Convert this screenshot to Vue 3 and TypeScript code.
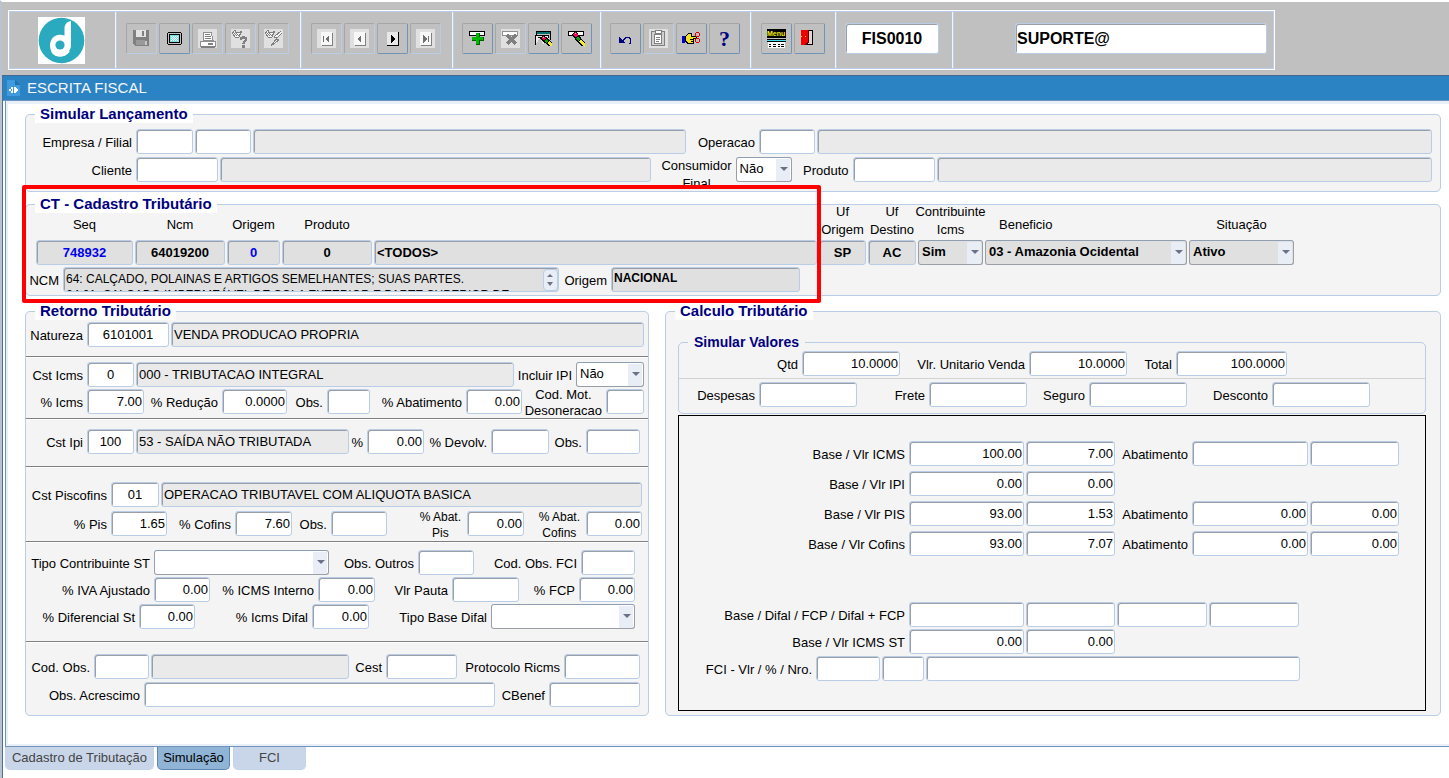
<script setup lang="ts">
import { h } from 'vue'
import type { FunctionalComponent } from 'vue'

type Mod = 'num' | 'mid' | 'ro' | ''

interface Cell {
  kind: 'label' | 'field' | 'select'
  id: string
  text: string
  mod?: Mod
  lines?: string[]
}

interface Row {
  name: string
  cells: Cell[]
}

const label = (id: string, text: string): Cell => ({ kind: 'label', id, text })
const stack = (id: string, ...lines: string[]): Cell => ({ kind: 'label', id, text: '', lines })
const field = (id: string, text = '', mod: Mod = ''): Cell => ({ kind: 'field', id, text, mod })
const select = (id: string, text = ''): Cell => ({ kind: 'select', id, text })

const FormRow: FunctionalComponent<{ row: Row }> = (props) =>
  h(
    'div',
    { class: ['row', props.row.name] },
    props.row.cells.map((c) => {
      if (c.kind === 'label') {
        return c.lines
          ? h('label', { class: 'lbl stack', for: c.id }, c.lines.map((l) => h('span', l)))
          : h('label', { class: 'lbl', for: c.id }, c.text)
      }
      if (c.kind === 'select') {
        return h('span', { class: 'combo' }, [h('select', { id: c.id }, [h('option', c.text)])])
      }
      return h('input', {
        id: c.id,
        class: ['field', c.mod],
        type: 'text',
        value: c.text,
        readonly: c.mod === 'ro',
        'aria-label': c.id.replace(/-/g, ' '),
      })
    }),
  )
FormRow.props = ['row']

const simular: Row[] = [
  {
    name: 'r-empresa',
    cells: [
      label('empresa', 'Empresa / Filial'), field('empresa'), field('filial'), field('empresa-nome', '', 'ro'),
      label('operacao', 'Operacao'), field('operacao'), field('operacao-nome', '', 'ro'),
    ],
  },
  {
    name: 'r-cliente',
    cells: [
      label('cliente', 'Cliente'), field('cliente'), field('cliente-nome', '', 'ro'),
      stack('consumidor', 'Consumidor', 'Final'), select('consumidor', 'Não'),
      label('produto', 'Produto'), field('produto'), field('produto-nome', '', 'ro'),
    ],
  },
]

const groups: { name: string; rows: Row[] }[] = [
  {
    name: 'g-natureza',
    rows: [
      {
        name: 'r-natureza',
        cells: [label('natureza', 'Natureza'), field('natureza', '6101001', 'mid'), field('natureza-nome', 'VENDA PRODUCAO PROPRIA', 'ro')],
      },
    ],
  },
  {
    name: 'g-icms',
    rows: [
      {
        name: 'r-cst-icms',
        cells: [
          label('cst-icms', 'Cst Icms'), field('cst-icms', '0', 'mid'), field('cst-icms-nome', '000 - TRIBUTACAO INTEGRAL', 'ro'),
          label('incluir-ipi', 'Incluir IPI'), select('incluir-ipi', 'Não'),
        ],
      },
      {
        name: 'r-icms',
        cells: [
          label('icms', '% Icms'), field('icms', '7.00', 'num'), label('reducao', '% Redução'), field('reducao', '0.0000', 'num'),
          label('obs-icms', 'Obs.'), field('obs-icms'), label('abatimento', '% Abatimento'), field('abatimento', '0.00', 'num'),
          stack('desoneracao', 'Cod. Mot.', 'Desoneracao'), field('desoneracao'),
        ],
      },
    ],
  },
  {
    name: 'g-ipi',
    rows: [
      {
        name: 'r-ipi',
        cells: [
          label('cst-ipi', 'Cst Ipi'), field('cst-ipi', '100', 'mid'), field('cst-ipi-nome', '53 - SAÍDA NÃO TRIBUTADA', 'ro'),
          label('ipi', '%'), field('ipi', '0.00', 'num'), label('devolv', '% Devolv.'), field('devolv'),
          label('obs-ipi', 'Obs.'), field('obs-ipi'),
        ],
      },
    ],
  },
  {
    name: 'g-pis',
    rows: [
      {
        name: 'r-cst-pis',
        cells: [
          label('cst-pis', 'Cst Piscofins'), field('cst-pis', '01', 'mid'),
          field('cst-pis-nome', 'OPERACAO TRIBUTAVEL COM ALIQUOTA BASICA', 'ro'),
        ],
      },
      {
        name: 'r-pis',
        cells: [
          label('pis', '% Pis'), field('pis', '1.65', 'num'), label('cofins', '% Cofins'), field('cofins', '7.60', 'num'),
          label('obs-pis', 'Obs.'), field('obs-pis'), stack('abat-pis', '% Abat.', 'Pis'), field('abat-pis', '0.00', 'num'),
          stack('abat-cofins', '% Abat.', 'Cofins'), field('abat-cofins', '0.00', 'num'),
        ],
      },
    ],
  },
  {
    name: 'g-st',
    rows: [
      {
        name: 'r-tipo-st',
        cells: [
          label('tipo-st', 'Tipo Contribuinte ST'), select('tipo-st'), label('obs-outros', 'Obs. Outros'), field('obs-outros'),
          label('obs-fci', 'Cod. Obs. FCI'), field('obs-fci'),
        ],
      },
      {
        name: 'r-iva',
        cells: [
          label('iva', '% IVA Ajustado'), field('iva', '0.00', 'num'), label('icms-interno', '% ICMS Interno'), field('icms-interno', '0.00', 'num'),
          label('pauta', 'Vlr Pauta'), field('pauta'), label('fcp', '% FCP'), field('fcp', '0.00', 'num'),
        ],
      },
      {
        name: 'r-difal',
        cells: [
          label('dif-st', '% Diferencial St'), field('dif-st', '0.00', 'num'), label('icms-difal', '% Icms Difal'), field('icms-difal', '0.00', 'num'),
          label('base-difal', 'Tipo Base Difal'), select('base-difal'),
        ],
      },
    ],
  },
  {
    name: 'g-obs',
    rows: [
      {
        name: 'r-cod-obs',
        cells: [
          label('cod-obs', 'Cod. Obs.'), field('cod-obs'), field('cod-obs-nome', '', 'ro'), label('cest', 'Cest'), field('cest'),
          label('protocolo', 'Protocolo Ricms'), field('protocolo'),
        ],
      },
      {
        name: 'r-acrescimo',
        cells: [label('acrescimo', 'Obs. Acrescimo'), field('acrescimo'), label('cbenef', 'CBenef'), field('cbenef')],
      },
    ],
  },
]

const valores: Row[] = [
  {
    name: 'r-qtd',
    cells: [
      label('qtd', 'Qtd'), field('qtd', '10.0000', 'num'), label('unitario', 'Vlr. Unitario Venda'), field('unitario', '10.0000', 'num'),
      label('total', 'Total'), field('total', '100.0000', 'num'),
    ],
  },
  {
    name: 'r-despesas',
    cells: [
      label('despesas', 'Despesas'), field('despesas'), label('frete', 'Frete'), field('frete'),
      label('seguro', 'Seguro'), field('seguro'), label('desconto', 'Desconto'), field('desconto'),
    ],
  },
]

const bases: Row[] = [
  {
    name: 'r-base',
    cells: [
      label('b-icms', 'Base / Vlr ICMS'), field('b-icms', '100.00', 'num'), field('v-icms', '7.00', 'num'),
      label('ab-icms', 'Abatimento'), field('ab-icms'), field('av-icms'),
    ],
  },
  { name: 'r-base', cells: [label('b-ipi', 'Base / Vlr IPI'), field('b-ipi', '0.00', 'num'), field('v-ipi', '0.00', 'num')] },
  {
    name: 'r-base',
    cells: [
      label('b-pis', 'Base / Vlr PIS'), field('b-pis', '93.00', 'num'), field('v-pis', '1.53', 'num'),
      label('ab-pis', 'Abatimento'), field('ab-pis', '0.00', 'num'), field('av-pis', '0.00', 'num'),
    ],
  },
  {
    name: 'r-base',
    cells: [
      label('b-cofins', 'Base / Vlr Cofins'), field('b-cofins', '93.00', 'num'), field('v-cofins', '7.07', 'num'),
      label('ab-cofins', 'Abatimento'), field('ab-cofins', '0.00', 'num'), field('av-cofins', '0.00', 'num'),
    ],
  },
]

const totais: Row[] = [
  {
    name: 'r-fcp',
    cells: [label('t-difal', 'Base / Difal / FCP / Difal + FCP'), field('t-difal'), field('t-valor'), field('t-fcp'), field('t-soma')],
  },
  { name: 'r-fcp', cells: [label('t-st', 'Base / Vlr ICMS ST'), field('t-st', '0.00', 'num'), field('v-st', '0.00', 'num')] },
  { name: 'r-fci', cells: [label('fci', 'FCI - Vlr / % / Nro.'), field('fci'), field('fci-perc'), field('fci-nro')] },
]

const ncmTexto =
  '64: CALÇADO, POLAINAS E ARTIGOS SEMELHANTES; SUAS PARTES.\n64.01: CALÇADO IMPERMEÁVEL DE SOLA EXTERIOR E PARTE SUPERIOR DE'
</script>

<template>
  <div class="app">
    <header class="toolbar">
      <div class="frame">
        <div class="sec s-logo">
          <svg class="logo" viewBox="0 0 47 47" aria-label="Logo">
            <rect width="47" height="47" fill="#fff" />
            <circle cx="23.5" cy="23.5" r="22.8" fill="#2aaabf" />
            <path d="M33 4C28 5 26.500 8 26.500 12V18.500C17 15.500 12 22 12 28.500C12 35 16.500 39.500 22 39.500C26 39.500 28.500 38 29.500 35.500C32 34 33 31 33 28Z" fill="#fff" />
            <circle cx="22" cy="28" r="4.600" fill="#2aaabf" />
            <path d="M14 34C17 40 26 40 31 34" fill="none" stroke="#fff" stroke-width="2" />
          </svg>
        </div>
        <div class="sec">
          <button class="tool off" aria-label="Salvar">
            <svg viewBox="0 0 19 19"><path d="M1 1H17V17H3L1 15Z" fill="#808080" /><path d="M4 1H14V8H4Z" fill="#e4e4e4" /><path d="M10 2H12V7H10Z" fill="#808080" /><path d="M4 11H13V16H4Z" fill="#999" /><path d="M13 12H15V16H13Z" fill="#c8c8c8" /></svg>
          </button>
          <button class="tool" aria-label="Tela">
            <svg viewBox="0 0 19 19"><path d="M3 3H16V4H17V15H16V16H3V15H2V4H3Z" fill="#000" /><path d="M3 4H16V15H3Z" fill="#c0c0c0" /><path d="M4 5H15V14H4Z" fill="#000" /><path d="M5 6H14V13H5Z" fill="#70e4e4" /><path d="M6 7.500h1M8 7.500h1M10 7.500h1M12 7.500h1M7 8.500h1M9 8.500h1M11 8.500h1M6 9.500h1M8 9.500h1M10 9.500h1M12 9.500h1M7 10.500h1M9 10.500h1M11 10.500h1M6 11.500h1M8 11.500h1M10 11.500h1M12 11.500h1" stroke="#fff" /></svg>
          </button>
          <button class="tool off" aria-label="Imprimir">
            <svg viewBox="0 0 19 19"><path d="M0 0H19V19H0Z" fill="#e0e0e0" /><path d="M5 3H13L15 11H5Z" fill="#fff" stroke="#909090" /><path d="M7 5.500H12M7 7.500H13M7 9.500H13" stroke="#808080" /><path d="M2 12H17V17H2Z" fill="#fff" stroke="#909090" /><path d="M3 17.500H17M10 14.500H15" stroke="#808080" stroke-width="2" /></svg>
          </button>
          <button class="tool off" aria-label="Consultar">
            <svg viewBox="0 0 19 19"><path d="M0 0H19V19H0Z" fill="#e0e0e0" /><path d="M1 4L4 1L5 4L10 3L8 8L4 8ZM9 2l2 2" fill="#f4f4f4" stroke="#808080" /><path d="M5 4l3 3M2 3l4 4" stroke="#808080" /><path d="M10 10.500C10 8 15 8 15 10.500C15 12.500 12.500 12 12.500 14.500M12.500 16V18.500" fill="none" stroke="#808080" stroke-width="2.500" /></svg>
          </button>
          <button class="tool off" aria-label="Executar consulta">
            <svg viewBox="0 0 19 19"><path d="M0 0H19V19H0Z" fill="#e0e0e0" /><path d="M1 4L4 1L5 4L10 3L8 8L4 8ZM9 2l2 2" fill="#f4f4f4" stroke="#808080" /><path d="M5 4l3 3M2 3l4 4" stroke="#808080" /><path d="M17 2L10 8L13 9L7 17L15 11L12 10L18 4" fill="#f4f4f4" stroke="#808080" /></svg>
          </button>
        </div>
        <div class="sec s-nav">
          <button class="tool off" aria-label="Primeiro">
            <svg viewBox="0 0 19 19"><path d="M0 0H19V19H0Z" fill="#e0e0e0" /><path d="M4 3H15V16H4Z" fill="#f8f8f8" /><path d="M5 16.500H15.500V4" fill="none" stroke="#808080" /><path d="M6 7H7V13H6ZM12 6V14L8 10Z" fill="#707070" /></svg>
          </button>
          <button class="tool off" aria-label="Anterior">
            <svg viewBox="0 0 19 19"><path d="M0 0H19V19H0Z" fill="#e0e0e0" /><path d="M4 3H15V16H4Z" fill="#f8f8f8" /><path d="M5 16.500H15.500V4" fill="none" stroke="#808080" /><path d="M11 6V14L7 10Z" fill="#707070" /></svg>
          </button>
          <button class="tool" aria-label="Próximo">
            <svg viewBox="0 0 19 19"><path d="M4 3H15V16H4Z" fill="#e8e8e8" /><path d="M4 16.500H15.500V3" fill="none" stroke="#000" /><path d="M8 6V14L12 10Z" fill="#000" /></svg>
          </button>
          <button class="tool off" aria-label="Último">
            <svg viewBox="0 0 19 19"><path d="M0 0H19V19H0Z" fill="#e0e0e0" /><path d="M4 3H15V16H4Z" fill="#f8f8f8" /><path d="M5 16.500H15.500V4" fill="none" stroke="#808080" /><path d="M7 6V14L11 10ZM12 7H13V13H12Z" fill="#707070" /></svg>
          </button>
        </div>
        <div class="sec s-edit">
          <button class="tool" aria-label="Inserir">
            <svg viewBox="0 0 19 19"><path d="M1.500 2.500H16.500V6.500H1.500Z" fill="#fff" stroke="#000" /><path d="M8 4H12V8H16V12H12V16H8V12H4V8H8Z" fill="#006000" /><path d="M8 4H11V8H15V11H11V15H8V11H4V8H8Z" fill="#00b800" /></svg>
          </button>
          <button class="tool off" aria-label="Excluir">
            <svg viewBox="0 0 19 19"><path d="M0 0H19V19H0Z" fill="#e0e0e0" /><path d="M1.500 2.500H16.500V6.500H1.500Z" fill="#fff" stroke="#909090" /><path d="M6 6L15 15M15 6L6 15" stroke="#808080" stroke-width="3" /></svg>
          </button>
          <button class="tool" aria-label="Limpar tela">
            <svg viewBox="0 0 19 19"><path d="M2 2H17V5H2Z" fill="#007070" /><path d="M1 6H15V9L9 15H1Z" fill="#e8e8e8" /><path d="M2 2.500H17M2.500 2V6M16.500 2V11M1 6.500H15M1.500 6V16M4 8.500H9M14.500 6V9" stroke="#000" fill="none" /><path d="M2 15L6 9L9 15Z" fill="#c0c0c0" /><path d="M6 9L9 6L12 8L18 14V17H15L7 11Z" fill="#000" /><path d="M7 9L9 7L12 9L10 12Z" fill="#f00060" /><path d="M9 8H10V9H9Z" fill="#ffd040" /><path d="M10 12L12 10L14 12L12 14Z" fill="#00a800" /><path d="M13 14L15 12L18 15V17H16Z" fill="#f4ec30" /></svg>
          </button>
          <button class="tool" aria-label="Limpar registro">
            <svg viewBox="0 0 19 19"><path d="M1.500 2.500H16.500V6.500H1.500Z" fill="#fff" stroke="#000" /><path d="M5 5L8 2L11 5L18 14V17H15L9 12Z" fill="#000" /><path d="M6 5L8 3L11 6L9 9Z" fill="#f00060" /><path d="M8 4H9V5H8Z" fill="#ffd040" /><path d="M9 9L11 7L13 10L11 12Z" fill="#00a800" /><path d="M12 12L14 10L18 15V18H17Z" fill="#f4ec30" /></svg>
          </button>
        </div>
        <div class="sec s-help">
          <button class="tool" aria-label="Desfazer">
            <svg viewBox="0 0 19 19"><path d="M3 8V14H9L7 12L10 9H12L14 11V14H13V15H15V10L13 8H9L6 11L3 8Z" fill="#000080" /></svg>
          </button>
          <button class="tool off" aria-label="Colar">
            <svg viewBox="0 0 19 19"><path d="M0 0H19V19H0Z" fill="#e0e0e0" /><rect x="2.500" y="2.500" width="13" height="14" rx="1" fill="#d0d0d0" stroke="#808080" /><path d="M5.500 5.500H12.500V14.500H5.500ZM6 1.500H12V4H6Z" fill="#fff" stroke="#808080" /><path d="M7 8.500H11M7 10.500H11M7 12.500H10" stroke="#808080" /></svg>
          </button>
          <button class="tool" aria-label="Recortar">
            <svg viewBox="0 0 19 19"><path d="M0 7H3V14H0Z" fill="#0000d0" /><path d="M3 7L6 4H10V7H15V10H12V15H6L3 13Z" fill="#000" /><path d="M4 7L7 5H9V8H14V9H11V14H7L4 12Z" fill="#f4e420" /><path d="M8 10.500H12M9 12.500H11" stroke="#000" /><circle cx="15.500" cy="5.500" r="2" fill="none" stroke="#e00000" /><circle cx="15.500" cy="11.500" r="2" fill="none" stroke="#e00000" /></svg>
          </button>
          <button class="tool ask" aria-label="Ajuda">?</button>
        </div>
        <div class="sec s-menu">
          <button class="tool" aria-label="Menu">
            <svg viewBox="0 0 19 19"><path d="M0 0H19V9H0Z" fill="#000" /><text x="0" y="7" class="mini">Menu</text><path d="M0 10H19V13H0Z" fill="#40e0f0" /><path d="M0 10.500H19M0 12.500H19" stroke="#000" /><path d="M1 13H18V19H1Z" fill="#fff" /><path d="M2 15.500H4M6 15.500H9M11 15.500H13M14 15.500H17M2 17.500H4M6 17.500H9M11 17.500H13M14 17.500H17" stroke="#000" /></svg>
          </button>
          <button class="tool" aria-label="Sair">
            <svg viewBox="0 0 19 19"><path d="M1.500 1.500H12.500V15.500H1.500Z" fill="#fff" stroke="#000" /><path d="M0 1H8V13L5 16H1V1Z" fill="#f00000" /><path d="M5.500 16L8.500 13V1" fill="none" stroke="#600" /><path d="M1 7H2V8H1ZM5 7H6V8H5Z" fill="#f8e000" /><path d="M9 2H12V15H7L9 13Z" fill="#d8d8d8" /></svg>
          </button>
        </div>
        <div class="sec s-code">
          <input class="field code" type="text" value="FIS0010" aria-label="Programa" />
        </div>
        <div class="sec s-user">
          <input class="field user" type="text" value="SUPORTE@" aria-label="Usuário" />
        </div>
      </div>
    </header>

    <div class="window">
      <h1 class="title">
        <svg viewBox="0 0 13 16" aria-hidden="true"><path d="M0 0H8L13 5V16H0Z" fill="#3f9bdd" /><path d="M8 0V5H13" fill="#2372ad" /><path d="M2 9H4V7H6V13H4V11H2ZM7 7H8L11 10L8 13H7Z" fill="#fff" /><path d="M4 9H5V11H4Z" fill="#3f9bdd" /></svg>
        ESCRITA FISCAL
      </h1>
      <main class="panel">
        <fieldset class="box b-simular">
          <legend>Simular Lançamento</legend>
          <FormRow v-for="r in simular" :key="r.name" :row="r" />
        </fieldset>

        <div class="ct-wrap">
          <fieldset class="box b-ct">
            <legend>CT - Cadastro Tributário</legend>
            <div class="ct">
              <label class="head" for="ct-seq">Seq</label>
              <label class="head" for="ct-ncm">Ncm</label>
              <label class="head" for="ct-origem">Origem</label>
              <label class="head" for="ct-produto">Produto</label>
              <span></span>
              <label class="head two" for="ct-uf-o"><span>Uf</span><span>Origem</span></label>
              <label class="head two" for="ct-uf-d"><span>Uf</span><span>Destino</span></label>
              <label class="head two" for="ct-contrib"><span>Contribuinte</span><span>Icms</span></label>
              <label class="head lead" for="ct-benef">Beneficio</label>
              <label class="head" for="ct-sit">Situação</label>
              <input id="ct-seq" class="field mid ct-f blue" type="text" value="748932" />
              <input id="ct-ncm" class="field mid ct-f" type="text" value="64019200" />
              <input id="ct-origem" class="field mid ct-f blue" type="text" value="0" />
              <input id="ct-produto" class="field mid ct-f" type="text" value="0" />
              <input class="field ct-f" type="text" value="<TODOS>" aria-label="Nome do produto" />
              <input id="ct-uf-o" class="field mid ct-f" type="text" value="SP" />
              <input id="ct-uf-d" class="field mid ct-f" type="text" value="AC" />
              <span class="combo dim"><select id="ct-contrib"><option>Sim</option></select></span>
              <span class="combo dim"><select id="ct-benef"><option>03 - Amazonia Ocidental</option></select></span>
              <span class="combo dim"><select id="ct-sit"><option>Ativo</option></select></span>
            </div>
            <div class="row r-ncm">
              <label class="lbl" for="ncm-texto">NCM</label>
              <span class="memo">
                <textarea id="ncm-texto" class="field" readonly :value="ncmTexto"></textarea>
                <span class="spin"><i class="up"></i><i class="down"></i></span>
              </span>
              <label class="lbl" for="origem-texto">Origem</label>
              <input id="origem-texto" class="field ct-f small" type="text" value="NACIONAL" />
            </div>
          </fieldset>
          <div class="mark"></div>
        </div>

        <div class="cols">
          <fieldset class="box b-retorno">
            <legend>Retorno Tributário</legend>
            <div v-for="g in groups" :key="g.name" :class="['group', g.name]">
              <FormRow v-for="r in g.rows" :key="r.name" :row="r" />
            </div>
          </fieldset>
          <fieldset class="box b-calculo">
            <legend>Calculo Tributário</legend>
            <fieldset class="box b-valores">
              <legend>Simular Valores</legend>
              <FormRow v-for="r in valores" :key="r.name" :row="r" />
            </fieldset>
            <div class="calc">
              <div class="bases"><FormRow v-for="(r, i) in bases" :key="i" :row="r" /></div>
              <div class="totais"><FormRow v-for="(r, i) in totais" :key="i" :row="r" /></div>
            </div>
          </fieldset>
        </div>
      </main>
      <nav class="tabs">
        <button class="tab t1">Cadastro de Tributação</button>
        <button class="tab t2 on">Simulação</button>
        <button class="tab t3">FCI</button>
      </nav>
    </div>
  </div>
</template>

<style scoped>
.app {
  --line: #b9cde6;
  --dark: #9a9ea6;
  min-height: 100vh;
  display: flex;
  flex-direction: column;
  box-sizing: border-box;
  border-top: 2px solid #fff;
  border-left: 2px solid #b9c2cf;
  background: #c0c0c0;
  font: 13px/18px "Liberation Sans", Arial, sans-serif;
  color: #000;
}
.app :deep(*) { box-sizing: border-box; }
.toolbar { padding: 8px 6px 5px; }
.frame {
  display: flex;
  width: 1267px;
  max-width: 100%;
  height: 60px;
  border: 1px solid #fff;
  outline: 1px solid var(--line);
  outline-offset: -2px;
}
.sec {
  display: flex;
  gap: 2px;
  flex: 0 0 185px;
  padding: 12px 0 0 10px;
  border-left: 1px solid #f0f5fb;
  box-shadow: inset 1px 0 0 var(--line);
}
.s-logo { flex-basis: 106px; padding: 6px 0 0 29px; border-left: 0; box-shadow: none; }
.s-nav { flex-basis: 152px; }
.s-edit { flex-basis: 148px; padding-left: 9px; }
.s-help { flex-basis: 150px; padding-left: 9px; }
.s-menu { flex-basis: 85px; }
.s-code { flex-basis: 117px; padding-left: 9px; }
.s-user { flex: 1 1 0; padding: 12px 7px 0 62px; }
.logo { width: 47px; height: 47px; }
.tool {
  width: 31px;
  height: 31px;
  padding: 4px 5px;
  background: #c0c0c0;
  border: 1px solid #a6a6a6;
  border-right: 1px solid #7093b8;
  border-bottom: 1px solid #7093b8;
  border-radius: 2px;
  font: inherit;
}
.tool.off { border-right-color: var(--line); border-bottom-color: var(--line); }
.tool svg { display: block; width: 19px; height: 19px; shape-rendering: crispEdges; }
.tool.ask { padding: 0; font: bold 22px/24px "Liberation Serif", serif; color: #000080; }
.mini { font: bold 7px "Liberation Sans", sans-serif; fill: #f8f000; }

.window { flex: 1; display: flex; flex-direction: column; background: #fff; border-left: 1px solid #4d6f9c; }
.title {
  display: flex;
  align-items: center;
  gap: 7px;
  margin: 0;
  height: 26px;
  padding: 0 4px;
  background: #2c83c4;
  border-top: 1px solid #46688f;
  border-bottom: 1px solid #6f93ba;
  font: 15px/24px "Liberation Sans", Arial, sans-serif;
  color: #f2f6fa;
}
.title svg { width: 13px; height: 16px; shape-rendering: crispEdges; }
.panel {
  margin-left: 2px;
  padding: 4px 8px 30px 19px;
  border-left: 1px solid #6f93ba;
  border-bottom: 1px solid #6f93ba;
  box-shadow: inset 2px 3px 0 #e9eff7, inset 0 -2px 0 #e9eff7;
}
.box {
  margin: 0;
  padding: 0;
  min-width: 0;
  background: #f4f4f4;
  border: 1px solid var(--line);
  border-radius: 5px;
}
.box > legend {
  margin-left: 9px;
  padding: 0 5px;
  height: 18px;
  background: #fff;
  font: bold 15px/18px "Liberation Sans", Arial, sans-serif;
  color: #000080;
}
.b-simular { padding: 6px 0 9px; }
.b-simular :deep(.row + .row) { margin-top: 3px; }

.app :deep(.row) { display: grid; column-gap: 2px; height: 25px; justify-content: start; }
.app :deep(.lbl) { padding: 5px 2px 0 0; text-align: right; white-space: nowrap; line-height: 18px; }
.app :deep(.stack) {
  justify-self: end;
  margin-top: -2px;
  padding: 0 2px 0 0;
  text-align: center;
  line-height: 16px;
}
.app :deep(.stack span) { display: block; }
.app :deep(.r-cliente .stack) { height: 28px; margin-top: 0; overflow: hidden; line-height: 18px; }
.app :deep(.r-pis .stack) { font-size: 12px; padding-right: 4px; }
.app :deep(.field) {
  width: 100%;
  min-width: 0;
  height: 25px;
  margin: 0;
  padding: 0 2px 1px;
  border: 1px solid var(--line);
  border-radius: 3px;
  box-shadow: inset 1px 1px 0 var(--dark);
  background: #fff;
  font: 13px/18px "Liberation Sans", Arial, sans-serif;
  color: #000;
  outline: none;
}
.app :deep(.num) { text-align: right; padding-right: 1px; }
.app :deep(.mid) { text-align: center; }
.app :deep(.ro) { background: #eaeaea; }
.app :deep(.ct-f) { background: #e0e0e0; font-weight: bold; }
.app :deep(.small) { padding-bottom: 3px; font-size: 12px; }
.app :deep(.blue) { color: #0000f0; }
.app .field.code, .app .field.user { height: 31px; padding: 0 1px; font: bold 16px/20px "Liberation Sans", Arial, sans-serif; }
.app .field.code { width: 94px; text-align: center; }
.app :deep(.combo) { position: relative; display: block; min-width: 0; height: 25px; }
.app :deep(.combo select) {
  appearance: none;
  width: 100%;
  height: 100%;
  padding: 0 16px 1px 3px;
  border: 1px solid var(--dark);
  border-top-color: #8f9eb0;
  border-radius: 3px;
  background: linear-gradient(#e8edf6, #e8edf6) right 1px top 1px / 14px 100% no-repeat #fff;
  font: inherit;
  color: #000;
}
.app :deep(.combo)::after {
  content: "";
  position: absolute;
  right: 4px;
  top: 10px;
  border: 4px solid transparent;
  border-top: 4px solid #6b7288;
  border-bottom: 0;
  pointer-events: none;
}
.app .combo.dim select { background-color: #e0e0e0; font-weight: bold; }

.app :deep(.r-empresa) { grid-template-columns: 108px 57px 56px minmax(0, 433fr) 69px 56px minmax(0, 615fr); padding-right: 8px; }
.app :deep(.r-cliente) { grid-template-columns: 108px 82px minmax(0, 431fr) 81px 56px 57px 82px minmax(0, 496fr); padding-right: 8px; }

.ct-wrap { position: relative; margin-top: 3px; }
.b-ct { padding-bottom: 3px; }
.ct {
  display: grid;
  grid-template: 27px 25px / 97px 90px 53px 90px minmax(0, 1fr) 47px 48px 65px 202px 105px;
  column-gap: 2px;
  padding: 0 146px 0 10px;
}
.head { align-self: end; justify-self: center; padding-bottom: 6px; white-space: nowrap; text-align: center; }
.head.two { padding-bottom: 1px; }
.head.two span { display: block; }
.head.lead { justify-self: start; padding-left: 14px; }
.app .r-ncm { grid-template-columns: 35px minmax(0, 1fr) 48px 189px; margin-top: 2px; padding-right: 640px; }
.memo { position: relative; display: block; }
.app .memo textarea {
  display: block;
  resize: none;
  overflow: hidden;
  padding: 3px 18px 0 2px;
  background: #e0e0e0;
  font-size: 12px;
  line-height: 16px;
  white-space: pre;
}
.spin {
  position: absolute;
  right: 1px;
  top: 2px;
  width: 15px;
  height: 22px;
  background: #e8edf6;
  border: 1px solid var(--line);
  border-radius: 4px;
}
.spin i { position: absolute; left: 3px; border: 3px solid transparent; }
.spin .up { top: 4px; border-bottom: 3px solid #6b7288; border-top: 0; }
.spin .down { bottom: 4px; border-top: 4px solid #6b7288; border-bottom: 0; }
.mark {
  position: absolute;
  left: -3px;
  right: 620px;
  top: -10px;
  bottom: -7px;
  border: 4px solid #f00;
  border-radius: 2px;
  pointer-events: none;
}

.cols { display: grid; grid-template-columns: minmax(0, 624fr) minmax(0, 776fr); gap: 16px; margin-top: 6px; }
.group { border-bottom: 1px solid #808080; box-shadow: 0 1px 0 #fff; margin-bottom: 1px; display: grid; }
.g-natureza { padding: 2px 0 9px; }
.g-icms { padding: 4px 0; row-gap: 2px; }
.g-ipi { padding: 9px 0 12px; }
.g-pis { padding: 14px 0 5px; row-gap: 4px; }
.g-st { padding: 7px 0 12px; row-gap: 2px; }
.g-obs { padding: 11px 0 8px; row-gap: 3px; border-bottom: 0; box-shadow: none; margin: 0; }
.app :deep(.r-natureza) { grid-template-columns: 59px 82px minmax(0, 1fr); padding-right: 4px; }
.app :deep(.r-cst-icms) { grid-template-columns: 59px 47px minmax(0, 1fr) 58px 68px; padding-right: 4px; }
.app :deep(.r-icms) { grid-template-columns: 59px 57px 74px 65px 36px 43px minmax(0, 1fr) 56px 80px 38px; padding-right: 4px; }
.app :deep(.r-ipi) { grid-template-columns: 59px 47px minmax(0, 1fr) 14px 57px 63px 58px 33px 54px; padding-right: 8px; }
.app :deep(.r-cst-pis) { grid-template-columns: 83px 48px minmax(0, 1fr); padding-right: 6px; }
.app :deep(.r-pis) { grid-template-columns: 83px 56px 64px 57px 35px 56px minmax(0, 1fr) 57px 58px 56px; padding-right: 6px; }
.app :deep(.r-tipo-st) { grid-template-columns: 126px minmax(0, 1fr) 85px 56px 103px 54px; padding-right: 13px; }
.app :deep(.r-iva) { grid-template-columns: 126px 56px 104px 57px minmax(0, 1fr) 67px 56px 56px; padding-right: 13px; }
.app :deep(.r-difal) { grid-template-columns: 111px 56px 113px 57px 118px minmax(0, 1fr); padding-right: 13px; }
.app :deep(.r-cod-obs) { grid-template-columns: 66px 55px minmax(0, 1fr) 33px 71px 103px 76px; padding-right: 8px; }
.app :deep(.r-acrescimo) { grid-template-columns: 116px minmax(0, 1fr) 50px 91px; padding-right: 8px; }

.b-calculo { padding: 13px 14px 4px 12px; display: flex; flex-direction: column; }
.b-calculo > legend { margin-left: -3px; }
.b-valores { padding-bottom: 6px; }
.box.b-valores > legend { margin-left: 9px; background: #f4f4f4; font-size: 14px; padding: 0 6px; }
.app :deep(.r-qtd) { grid-template-columns: 121px 98px 125px 98px 45px 111px; }
.app :deep(.r-despesas) {
  grid-template-columns: 78px 98px 68px 98px 58px 98px 81px 98px;
  height: 29px;
  margin-top: 2px;
  padding-top: 3px;
  border-top: 1px solid #d2d2d2;
}
.calc { flex: 1; margin-top: 1px; padding: 25px 0 28px; border: 1px solid #000; }
.bases { display: grid; row-gap: 5px; margin-bottom: 46px; }
.totais { display: grid; row-gap: 2px; }
.app :deep(.r-base) { grid-template-columns: 228px 115px 89px 73px 116px 89px; }
.app :deep(.r-fcp) { grid-template-columns: 228px 115px 89px 90px 90px; }
.app :deep(.r-fci) { grid-template-columns: 135px 64px 42px 374px; }

.tabs { display: flex; gap: 3px; padding-left: 2px; }
.tab {
  height: 23px;
  padding: 0;
  border: 1px solid #c3d3e8;
  border-top: 0;
  border-radius: 0 0 5px 5px;
  background: #c9d6e9;
  font: 13px/22px "Liberation Sans", Arial, sans-serif;
  color: #444;
}
.t1 { width: 149px; }
.t2 { width: 73px; }
.t3 { width: 73px; }
.tab.on { background: #8fb4d6; border-color: #5f87b3; color: #000; }
</style>

<style>
body { background: #fff; }
</style>
